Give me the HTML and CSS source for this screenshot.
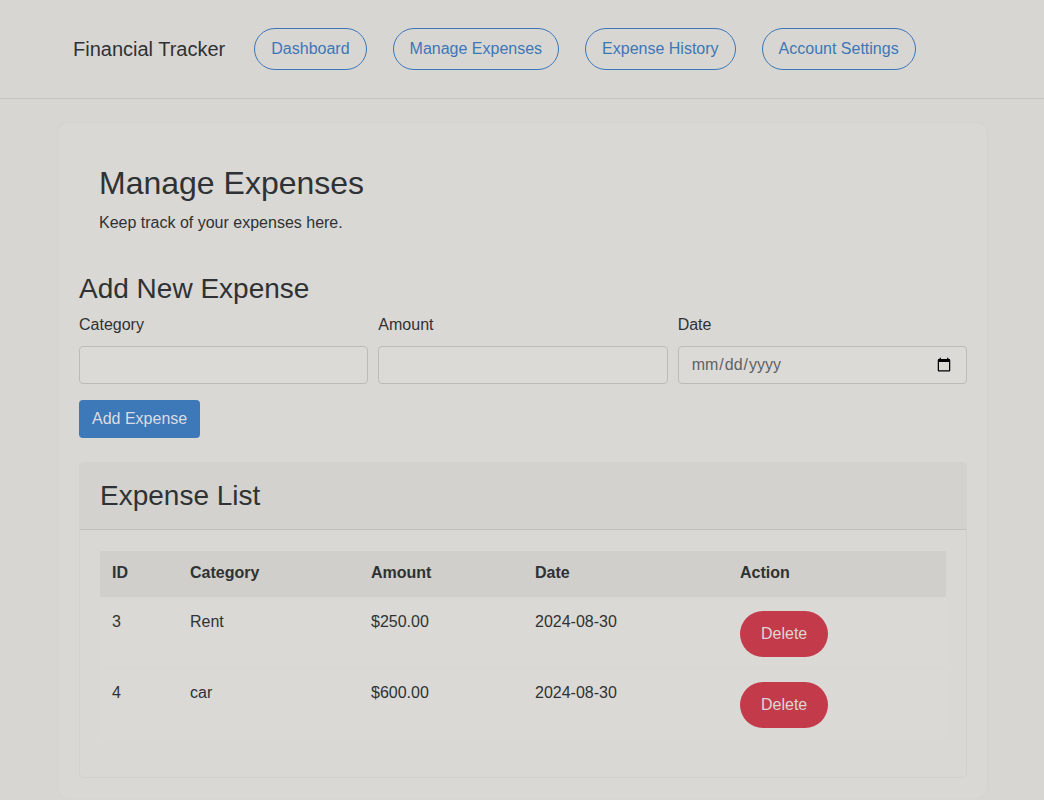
FILE: index.html
```html
<!DOCTYPE html>
<html lang="en">
<head>
<meta charset="utf-8">
<title>Financial Tracker</title>
<link rel="stylesheet" href="styles.css">
</head>
<body>
<nav class="navbar">
  <span class="brand">Financial Tracker</span>
  <a class="nav-btn" href="#">Dashboard</a>
  <a class="nav-btn" href="#">Manage Expenses</a>
  <a class="nav-btn" href="#">Expense History</a>
  <a class="nav-btn" href="#">Account Settings</a>
</nav>
<main class="page-card">
  <section class="intro">
    <h1 class="intro-title">Manage Expenses</h1>
    <p class="intro-text">Keep track of your expenses here.</p>
  </section>
  <h2 class="section-title">Add New Expense</h2>
  <form class="expense-form">
    <div class="form-row">
      <div class="field">
        <label class="field-label" for="category">Category</label>
        <input class="field-input" id="category" type="text">
      </div>
      <div class="field">
        <label class="field-label" for="amount">Amount</label>
        <input class="field-input" id="amount" type="number">
      </div>
      <div class="field">
        <label class="field-label" for="date">Date</label>
        <input class="field-input" id="date" type="date">
      </div>
    </div>
    <button class="btn-primary" type="button">Add Expense</button>
  </form>
  <section class="list-card">
    <header class="list-header">
      <h3 class="list-title">Expense List</h3>
    </header>
    <div class="list-body">
      <table class="expense-table">
        <thead>
          <tr>
            <th class="col-id">ID</th>
            <th class="col-cat">Category</th>
            <th class="col-amt">Amount</th>
            <th class="col-date">Date</th>
            <th class="col-act">Action</th>
          </tr>
        </thead>
        <tbody>
          <tr>
            <td>3</td>
            <td>Rent</td>
            <td>$250.00</td>
            <td>2024-08-30</td>
            <td><button class="btn-delete" type="button">Delete</button></td>
          </tr>
          <tr class="row-sep">
            <td>4</td>
            <td>car</td>
            <td>$600.00</td>
            <td>2024-08-30</td>
            <td><button class="btn-delete" type="button">Delete</button></td>
          </tr>
        </tbody>
      </table>
    </div>
  </section>
</main>
</body>
</html>
```

FILE: styles.css
```css
* { box-sizing: border-box; }

body {
  margin: 0;
  background: #d7d6d2;
  font-family: "Liberation Sans", Arial, sans-serif;
  font-size: 16px;
  line-height: 1.5;
  color: #2f3234;
}

.navbar {
  height: 99px;
  display: flex;
  align-items: center;
  padding-left: 73px;
  padding-bottom: 1px;
  border-bottom: 1px solid #c4c3bf;
}

.brand {
  font-size: 20px;
  color: #2f3234;
  margin-right: 29px;
}

.nav-btn {
  display: inline-block;
  padding: 8px 16px;
  border: 1px solid #3d77b8;
  border-radius: 21px;
  color: #3d77b8;
  text-decoration: none;
  line-height: 24px;
  margin-right: 26px;
}

.page-card {
  width: 929px;
  margin: 24px 0 0 58px;
  padding: 21px 20px 20px 21px;
  border-radius: 10px;
  background: #d9d8d4;
  box-shadow: 0 0 0 1px #d4d3cf;
}

.intro {
  padding: 20px 20px 16px;
}

.intro-title {
  margin: 0 0 9px;
  font-size: 32px;
  font-weight: 400;
  line-height: 1.2;
}

.intro-text {
  margin: 0;
  font-size: 16px;
}

.section-title {
  margin: 21px 0 7px;
  font-size: 28px;
  font-weight: 400;
  line-height: 1.2;
}

.form-row {
  display: flex;
  gap: 10px;
}

.field {
  flex: 1;
  display: flex;
  flex-direction: column;
}

.field-label {
  margin-bottom: 9px;
}

.field-input {
  height: 38px;
  padding: 6px 12px;
  border: 1px solid #bcbbb7;
  border-radius: 4px;
  background: #dbdad6;
  font-family: inherit;
  font-size: 16px;
  color: #5f6264;
}

.btn-primary {
  margin-top: 16px;
  height: 38px;
  padding: 6px 13px;
  border: 0;
  border-radius: 4px;
  background: #3d78b8;
  color: #dcdde2;
  font-family: inherit;
  font-size: 16px;
}

.list-card {
  margin-top: 24px;
  border: 1px solid #d2d1cd;
  border-radius: 5px;
  background: #d9d8d4;
}

.list-header {
  padding: 12px 20px;
  background: #d3d2ce;
  border-bottom: 1px solid #c0bfbb;
}

.list-title {
  margin: 0;
  font-size: 28px;
  font-weight: 400;
  line-height: 42px;
}

.list-body {
  padding: 21px 20px 39px;
}

.expense-table {
  width: 100%;
  border-collapse: collapse;
  background: #dad9d5;
}

.expense-table th {
  text-align: left;
  font-weight: 700;
  padding: 10px 12px 12px;
  background: #d0cfcb;
}

.expense-table td {
  padding: 13px 12px 10px;
  vertical-align: top;
}

.row-sep td {
  border-top: 1px solid #d8d7d3;
}

.col-id { width: 78px; }
.col-cat { width: 181px; }
.col-amt { width: 164px; }
.col-date { width: 205px; }

.btn-delete {
  margin-top: 1px;
  height: 46px;
  padding: 0 21px;
  border: 0;
  border-radius: 23px;
  background: #c33b4b;
  color: #dcd6d6;
  font-family: inherit;
  font-size: 16px;
}
```
